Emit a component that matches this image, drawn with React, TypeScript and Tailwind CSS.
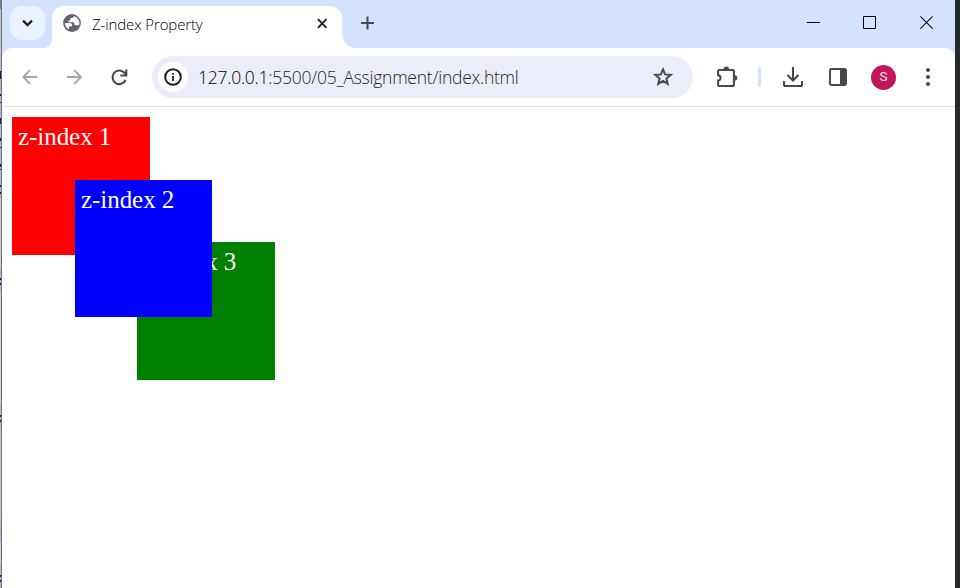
import React from "react";

// Slices of the editor window that shows behind the browser's left edge.
const editorSlices: { height: number; color: string }[] = [
  { height: 9, color: "#7f7f7f" },
  { height: 53, color: "#c4c4c4" },
  { height: 9, color: "#a9bddb" },
  { height: 8, color: "#14203c" },
  { height: 15, color: "#a9bddb" },
  { height: 2, color: "#14203c" },
  { height: 6, color: "#a9bddb" },
  { height: 1, color: "#14203c" },
  { height: 15, color: "#a9bddb" },
  { height: 6, color: "#14203c" },
  { height: 14, color: "#a9bddb" },
  { height: 3, color: "#14203c" },
  { height: 6, color: "#a9bddb" },
  { height: 1, color: "#14203c" },
  { height: 16, color: "#a9bddb" },
  { height: 3, color: "#14203c" },
  { height: 2, color: "#a9bddb" },
  { height: 1, color: "#14203c" },
  { height: 15, color: "#a9bddb" },
  { height: 2, color: "#14203c" },
  { height: 5, color: "#a9bddb" },
  { height: 2, color: "#14203c" },
  { height: 5, color: "#a9bddb" },
  { height: 69, color: "#cccccc" },
  { height: 10, color: "#a9bddb" },
  { height: 2, color: "#14203c" },
  { height: 3, color: "#a9bddb" },
  { height: 2, color: "#14203c" },
  { height: 6, color: "#a9bddb" },
  { height: 114, color: "#cccccc" },
  { height: 10, color: "#a9bddb" },
  { height: 2, color: "#14203c" },
  { height: 3, color: "#a9bddb" },
  { height: 2, color: "#14203c" },
  { height: 6, color: "#a9bddb" },
  { height: 92, color: "#c9c9c9" },
  { height: 22, color: "#a9bddb" },
  { height: 23, color: "#cccccc" },
  { height: 10, color: "#a9bddb" },
  { height: 2, color: "#14203c" },
  { height: 3, color: "#a9bddb" },
  { height: 2, color: "#14203c" },
  { height: 6, color: "#a9bddb" },
];

function TabStrip() {
  return (
    <div className="flex h-12 shrink-0">
      <button className="ml-2 mt-[6px] flex h-[34px] w-[35px] items-center justify-center rounded-xl bg-[#ebf2ff]">
        <svg width="12" height="8" viewBox="0 0 12 8" fill="none" stroke="#1f1f1f" strokeWidth="2.2">
          <path d="M1 1.6 5.5 6.1 10 1.6" />
        </svg>
      </button>
      <svg className="-mr-px mt-9 shrink-0" width="8" height="12" viewBox="0 0 8 12">
        <path d="M8 0v12H0C5 10 8 6 8 0Z" fill="#fff" />
      </svg>
      <div className="flex h-[42px] mt-[6px] w-[290px] rounded-t-xl bg-white">
        <svg className="ml-[11px] mt-[8px] shrink-0" width="18" height="18" viewBox="0 0 19 19">
          <circle cx="9.5" cy="9.5" r="9.4" fill="#5f6368" />
          <path
            d="M2.1 9.4h4.7c1.9 0 2.8.9 2.8 2.2 0 1-.7 1.7-2 1.7H6.3v2.7A7.4 7.4 0 0 1 2.1 9.4ZM11.2 2.2c0 1.6-.7 2.1-1.9 2.1H7.8v1.4c0 .8-.4 1.2-1.3 1.2-.6 0-.9.3-.9 1 0 .5.4.7 1 .7h3.5c1.3 0 1.9.7 1.9 1.8s.6 1.6 1.7 1.6h3.2a7.4 7.4 0 0 0-5.7-9.8Z"
            fill="#fff"
          />
        </svg>
        <span className="ml-[11px] mt-[8px] w-[225px] shrink-0 whitespace-nowrap font-['Open_Sans',sans-serif] text-[15px] font-light leading-[21px] tracking-[-0.12px] text-black">
          Z-index Property
        </span>
        <svg className="mt-[12px] shrink-0" width="11" height="11" viewBox="0 0 11 11" stroke="#1f1f1f" strokeWidth="1.9">
          <path d="m.9 1.2 8.6 8.6M9.5 1.2.9 9.8" />
        </svg>
      </div>
      <svg className="-ml-px mt-8 shrink-0" width="16" height="16" viewBox="0 0 16 16">
        <path d="M0 0h1c0 10 5 16 15 16H0Z" fill="#fff" />
      </svg>
      <svg className="ml-[4px] mt-[16px] shrink-0" width="13" height="14" viewBox="0 0 13 14" stroke="#474747" strokeWidth="2">
        <path d="M0 7h13M6.5.5v13" />
      </svg>
      <div className="ml-auto mr-[22px] mt-[16px] flex">
        <svg width="13" height="13" viewBox="0 0 13 13">
          <path d="M0 6h13v1H0Z" fill="#000" />
        </svg>
        <svg className="ml-[43px]" width="13" height="13" viewBox="0 0 13 13" fill="none" stroke="#000">
          <path d="M.5.5h12v12H.5Z" />
        </svg>
        <svg className="ml-[44px]" width="13" height="13" viewBox="0 0 13 13" stroke="#111" strokeWidth="1.1">
          <path d="m.4.4 12.2 12.2M12.6.4.4 12.6" />
        </svg>
      </div>
    </div>
  );
}

function AddressBar() {
  return (
    <div className="ml-[24px] flex h-[42px] w-[541px] shrink-0 items-center rounded-full bg-[#ebeef8]">
      <div className="ml-[6px] flex size-[30px] shrink-0 items-center justify-center rounded-full bg-white">
        <svg width="18" height="18" viewBox="0 0 18 18" fill="none" stroke="#1f1f1f">
          <circle cx="9" cy="9" r="7.8" strokeWidth="2" />
          <path d="M9 8v5M9 5v1.8" strokeWidth="1.8" />
        </svg>
      </div>
      <span className="ml-[10px] whitespace-nowrap font-['Open_Sans',sans-serif] text-[17.5px] font-light leading-6 tracking-[-0.24px] text-[#262626]">
        <span className="text-black">127.0.0.1</span>:5500/05_Assignment/index.html
      </span>
      <svg className="ml-auto mr-[20px] shrink-0" width="20" height="20" viewBox="0 0 20 20" fill="none" stroke="#474747" strokeWidth="2">
        <path d="m10 2.4 2.1 5 5.5.5-4.2 3.6 1.3 5.4-4.7-2.9-4.7 2.9 1.3-5.4L2.4 7.9l5.5-.5Z" />
      </svg>
    </div>
  );
}

function Toolbar() {
  return (
    <div className="flex h-[59px] shrink-0 items-center rounded-t-[10px] border-b border-[#dedfe0] bg-white">
      <svg className="ml-[20px] shrink-0" width="16" height="16" viewBox="0 0 16 16" fill="none" stroke="#a6a6a6" strokeWidth="1.9">
        <path d="M15.3 8H1.6M8 1.2 1.3 8 8 14.8" />
      </svg>
      <svg className="ml-[29px] shrink-0" width="16" height="16" viewBox="0 0 16 16" fill="none" stroke="#a6a6a6" strokeWidth="1.9">
        <path d="M0 8h13.7M7.3 1.2 14 8l-6.7 6.8" />
      </svg>
      <svg className="ml-[28px] shrink-0" width="17" height="17" viewBox="0 0 17 17" fill="none" stroke="#474747" strokeWidth="2.1">
        <path d="M14.6 11A6.8 6.8 0 1 1 13.4 3.7l1.7 2M15.3.5v6H9.4" />
      </svg>
      <AddressBar />
      <svg className="ml-[23px] shrink-0" width="23" height="22" viewBox="0 0 23 22">
        <path d="M3.1 4h13.8q1 0 1 1v14q0 1-1 1H3.1q-1 0-1-1v-4.4c3.2-.2 3.2-5 0-5.3V5q0-1 1-1Z" fill="none" stroke="#474747" strokeWidth="2" />
        <path d="M7.6 3.2a2.7 2.7 0 0 1 5.4 0ZM18.6 9.2a2.7 2.7 0 0 1 0 5.4Z" fill="#474747" />
      </svg>
      <div className="ml-[19px] h-[20px] w-[3px] shrink-0 rounded-full bg-[#d3e3fd]" />
      <svg className="ml-[22px] shrink-0" width="20" height="20" viewBox="0 0 20 20" fill="none" stroke="#474747" strokeWidth="2.1">
        <path d="M10 0v13M4.5 8l5.5 5.5L15.5 8M1 14v4q0 1 1 1h16q1 0 1-1v-4" />
      </svg>
      <svg className="ml-[26px] shrink-0" width="18" height="18" viewBox="0 0 18 18">
        <rect x="1" y="1" width="16" height="16" rx="1.2" fill="none" stroke="#474747" strokeWidth="1.9" />
        <path d="M11 1h6v16h-6Z" fill="#474747" />
      </svg>
      <div className="ml-[24px] flex size-[25px] shrink-0 items-center justify-center rounded-full bg-[#c2185b] font-['Roboto',sans-serif] text-[13.5px] leading-none text-[#fbe6ee]">
        S
      </div>
      <svg className="ml-[30px] shrink-0" width="4" height="18" viewBox="0 0 4 18" fill="#474747">
        <circle cx="2" cy="2" r="2" />
        <circle cx="2" cy="9" r="2" />
        <circle cx="2" cy="16" r="2" />
      </svg>
    </div>
  );
}

// The demo page: three positioned squares that overlap.
function Page() {
  return (
    <div className="relative flex-1 bg-white font-['Liberation_Serif',serif] text-[25px] leading-[28px] tracking-[-0.05px] text-white">
      <div className="absolute left-[10px] top-[10px] h-[138px] w-[138px] bg-[#ff0000] p-[6px]">z-index 1</div>
      <div className="absolute left-[73px] top-[73px] z-20 h-[137px] w-[137px] bg-[#0000ff] p-[6px]">z-index 2</div>
      <div className="absolute left-[135px] top-[135px] z-10 h-[138px] w-[138px] bg-[#008000] p-[6px]">z-index 3</div>
    </div>
  );
}

export default function App() {
  return (
    <div className="flex h-[588px] w-[960px] overflow-hidden bg-[#25292a]">
      <div className="flex w-px shrink-0 flex-col">
        {editorSlices.map((slice, i) => (
          <div key={i} className="shrink-0" style={{ height: slice.height, backgroundColor: slice.color }} />
        ))}
      </div>
      <div className="w-px shrink-0 bg-[#717579]" />
      <div className="flex w-[953px] shrink-0 flex-col bg-[#d3e3fd]">
        <TabStrip />
        <Toolbar />
        <Page />
      </div>
    </div>
  );
}
